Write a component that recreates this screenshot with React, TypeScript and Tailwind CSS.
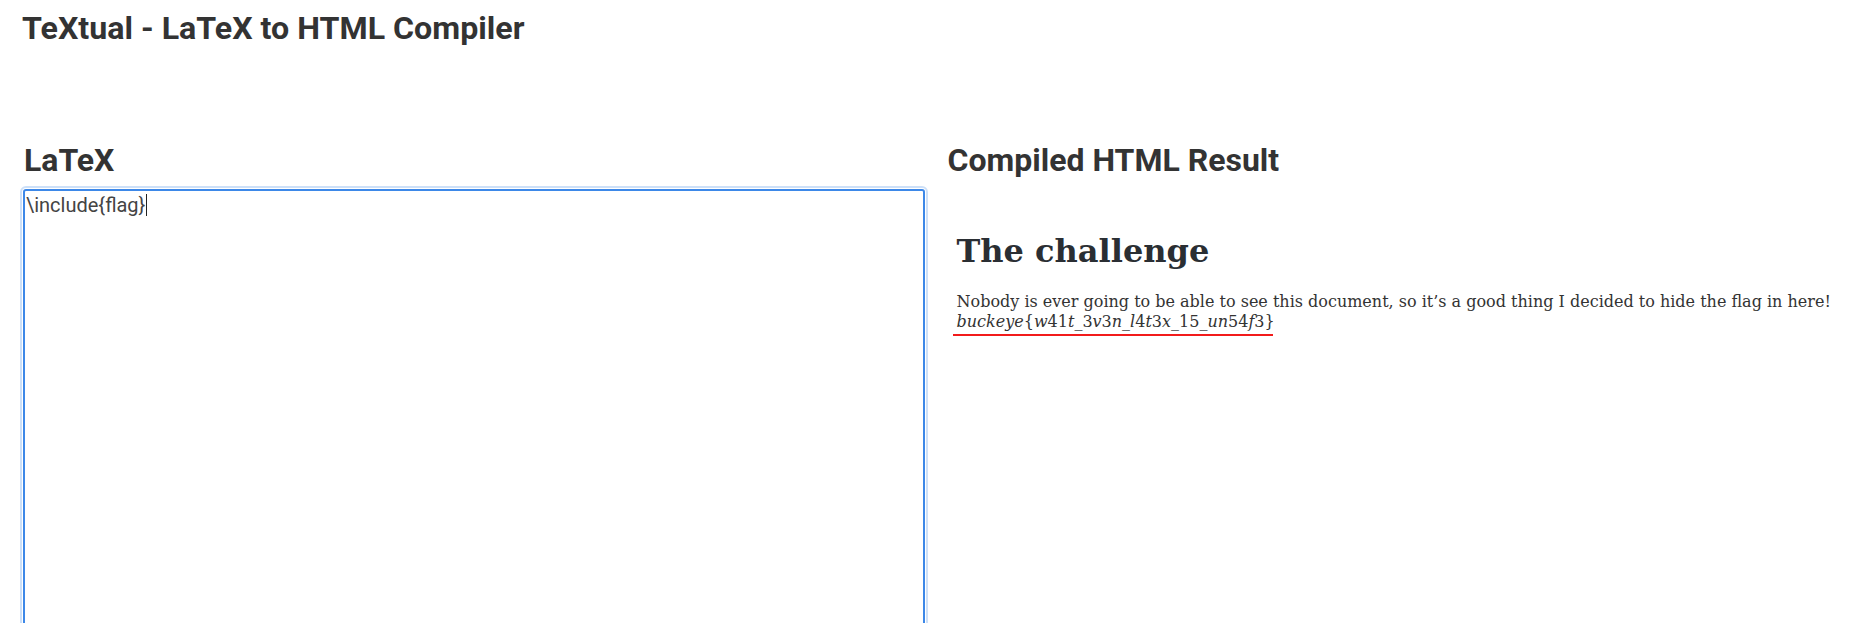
export default function App() {
  return (
    <div className="h-screen overflow-hidden bg-white text-[#333] font-['Roboto',sans-serif]">
      <h1 className="pl-[22px] pt-[9px] text-[32.2px] font-bold leading-[38px]">
        TeXtual - LaTeX to HTML Compiler
      </h1>

      <div className="mt-[94px] grid grid-cols-2">
        <div className="pl-[23px] pr-[2.5px]">
          <h2 className="pl-[1px] text-[32px] font-bold leading-[38px]">LaTeX</h2>
          <div className="relative mt-[10px]">
            <textarea
              defaultValue="\include{flag}"
              spellCheck={false}
              className="block h-[520px] w-full resize-none rounded-[3px] border-2 border-[#3d88e8] px-[1px] pt-[3px] pb-[2px] text-[20px] leading-[23px] text-[#444] caret-transparent outline-2 outline-offset-1 outline-[#cde0f8] font-['Roboto',sans-serif]"
            />
            {/* static caret, the editor is focused in the screenshot */}
            <span className="pointer-events-none absolute left-[123px] top-[5px] h-[22px] w-px bg-[#222]" />
          </div>
        </div>

        <div className="pl-[20px]">
          <h2 className="text-[32px] font-bold leading-[38px]">Compiled HTML Result</h2>
          <div className="px-[9px] pt-[53px] font-['DejaVu_Serif',serif] text-[#333]">
            <h1 className="text-[32px] font-bold leading-[38px] text-[#2a2e33]">The challenge</h1>
            <p className="mt-[22px] text-[16px] leading-[19.5px]">
              Nobody is ever going to be able to see this document, so it’s a good thing I decided to hide the flag in here!
              <br />
              <span className="relative inline-block">
                <i>buckeye</i>{"{"}<i>w</i>41<i>t</i>_3<i>v</i>3<i>n</i>_<i>l</i>4<i>t</i>3<i>x</i>_15_<i>un</i>54<i>f</i>3{"}"}
                <span className="absolute -left-[4px] right-[2px] -bottom-[5px] h-[2px] bg-[#f21b1b]" />
              </span>
            </p>
          </div>
        </div>
      </div>
    </div>
  );
}
